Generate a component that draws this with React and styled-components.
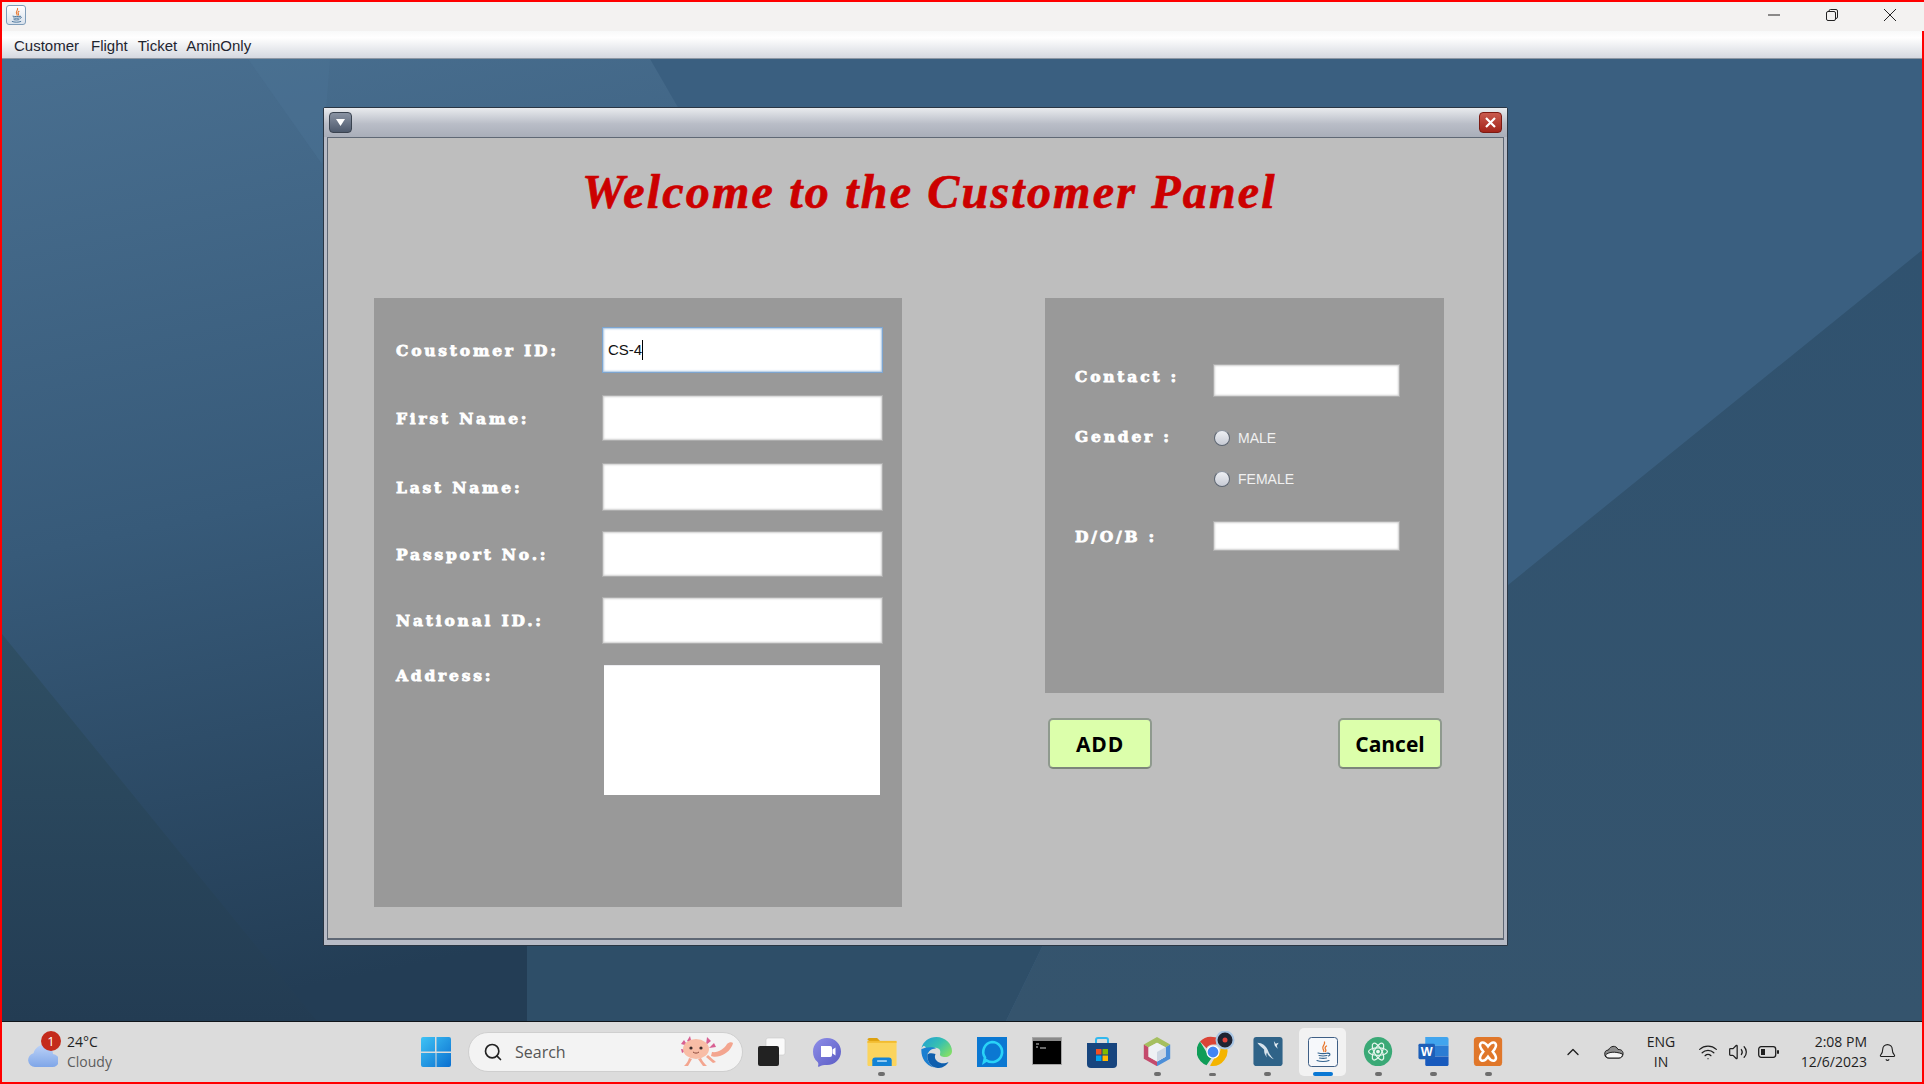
import styled, {createGlobalStyle} from "styled-components";
import {ChevronUp, Bell, Search, Wifi, Volume2} from "lucide-react";

const GlobalStyle = createGlobalStyle`
  html, body {
    margin: 0;
    padding: 0;
    background: #ff0000;
  }
  * {
    box-sizing: border-box;
  }
`

const Screen = styled.div`
  width: 1924px;
  height: 1084px;
  overflow: hidden;
  display: flex;
  flex-direction: column;
  padding: 2px 2px 2px 2px;
  background: #ff0000;
  font-family: "Liberation Sans", Arial, sans-serif;
`

const FrameTitle = styled.div`
  height: 29px;
  flex: none;
  display: flex;
  align-items: center;
  justify-content: space-between;
  padding: 0 0 3px 4px;
  margin-right: -2px;
  background: #f3f2f1;
`

const FrameControls = styled.div`
  display: flex;
  align-items: center;
  gap: 46px;
  padding-right: 28px;
`

const FrameIconTile = styled.div`
  width: 20px;
  height: 20px;
  border: 1px solid #7f9db9;
  border-radius: 3px;
  background: linear-gradient(#ffffff, #d9e2ec);
  display: flex;
  align-items: center;
  justify-content: center;
`

const MenuBar = styled.div`
  height: 28px;
  flex: none;
  display: flex;
  align-items: center;
  padding: 2px 0 0 7px;
  background: linear-gradient(#f8f9f9 0%, #ffffff 25%, #e6e8ec 70%, #d5d8e0 100%);
  border-bottom: 1px solid #8c96a3;
`

const MenuItem = styled.span`
  font-size: 15px;
  color: #1f2530;
  padding: 0 ${p => p.$pad}px 0 5px;
`

const Desktop = styled.div`
  flex: 1;
  position: relative;
  overflow: hidden;
  background: #3b6080;
`

const WallpaperArt = styled.svg`
  position: absolute;
  left: 0;
  top: 0;
  width: 100%;
  height: 100%;
`

const InternalWindow = styled.div`
  position: absolute;
  left: 321px;
  top: 48px;
  width: 1185px;
  height: 839px;
  display: flex;
  flex-direction: column;
  padding: 0 3px 5px 3px;
  border: 1px solid #2a3644;
  border-radius: 2px 2px 0 0;
  background: #b7bbc6;
`

const InternalTitle = styled.div`
  height: 29px;
  flex: none;
  margin: 0 -3px;
  padding: 4px 5px 4px 5px;
  display: flex;
  align-items: flex-start;
  justify-content: space-between;
  background: linear-gradient(#e9ebee, #b9bdc7 55%, #a9aeb9);
`

const MenuButton = styled.div`
  width: 23px;
  height: 21px;
  border-radius: 4px;
  border: 1px solid #3a4350;
  background: linear-gradient(#8a93a3, #4e5a6d);
  display: flex;
  align-items: center;
  justify-content: center;
`

const CloseButton = styled(MenuButton)`
  border-color: #7c1a12;
  background: linear-gradient(#c95a4e, #a3241a);
`

const Content = styled.div`
  flex: 1;
  display: flex;
  flex-direction: column;
  padding-left: 46px;
  border: 1px solid #5f6875;
  border-bottom-width: 2px;
  background: #bebebe;
`

const Heading = styled.h1`
  margin: 0;
  height: 160px;
  flex: none;
  padding-left: 208px;
  line-height: 108px;
  font-family: "Liberation Serif", "Times New Roman", serif;
  font-size: 48px;
  font-style: italic;
  font-weight: 700;
  letter-spacing: 2.2px;
  color: #cc0000;
  -webkit-text-stroke: 0.7px #cc0000;
  white-space: nowrap;
`

const Columns = styled.div`
  display: flex;
  align-items: flex-start;
  gap: 143px;
`

const LeftPanel = styled.div`
  width: 528px;
  height: 609px;
  padding: 29px 0 0 22px;
  background: #999999;
`

const RightColumn = styled.div`
  width: 399px;
  display: flex;
  flex-direction: column;
`

const RightPanel = styled.div`
  height: 395px;
  padding: 66px 0 0 30px;
  display: flex;
  flex-direction: column;
  gap: 20px;
  background: #999999;
`

const FormRow = styled.div`
  display: flex;
  align-items: ${p => p.$align || "center"};
  height: ${p => p.$h}px;
  margin-top: ${p => p.$mt || 0}px;
`

const Label = styled.div`
  width: ${p => p.$w}px;
  flex: none;
  margin-top: ${p => p.$drop || 0}px;
  margin-bottom: ${p => p.$lift || 0}px;
  font-family: "DejaVu Serif", "Liberation Serif", serif;
  font-size: 15.5px;
  font-weight: 700;
  letter-spacing: 2.8px;
  color: #ffffff;
  -webkit-text-stroke: 0.8px #ffffff;
  white-space: nowrap;
`

const Field = styled.div`
  width: ${p => p.$w}px;
  height: 100%;
  flex: none;
  display: flex;
  align-items: center;
  padding-left: 5px;
  font-size: 15px;
  color: #111111;
  background: #ffffff;
  border: 1px solid ${p => (p.$focused ? "#7da5d0" : "#adadad")};
  box-shadow: inset 0 0 2px 1px ${p => (p.$focused ? "#a9c5e2" : "#d0d0d0")};
`

const FieldValue = styled.span`
  border-right: 1px solid #000000;
  height: 20px;
  line-height: 20px;
  padding-right: 0;
`

const AddressBox = styled.div`
  width: 276px;
  height: 130px;
  margin-left: 2px;
  background: #ffffff;
  border-top: 1px solid #eeeef2;
`

const GenderRow = styled.div`
  display: flex;
  align-items: flex-start;
  height: 84px;
`

const GenderLabelSlot = styled.div`
  height: 39px;
  display: flex;
  align-items: center;
`

const RadioList = styled.div`
  display: flex;
  flex-direction: column;
`

const RadioRow = styled.div`
  height: 41px;
  display: flex;
  align-items: center;
  gap: 8px;
  padding-left: 1px;
  font-size: 14px;
  color: #f0f0f0;
`

const RadioDot = styled.span`
  width: 16px;
  height: 16px;
  border-radius: 50%;
  border: 1px solid #5d6672;
  border-top-color: #8f97a3;
  background: linear-gradient(#eef0f4, #c6cad4);
`

const ButtonRow = styled.div`
  margin-top: 25px;
  padding: 0 2px 0 3px;
  display: flex;
  justify-content: space-between;
`

const ActionButton = styled.div`
  width: 104px;
  height: 51px;
  display: flex;
  align-items: center;
  justify-content: center;
  border: 2px solid #8f9a8e;
  border-bottom-color: #7c857b;
  border-radius: 5px;
  background: #dcffab;
  font-family: "Open Sans", sans-serif;
  font-size: 21px;
  font-weight: 700;
  letter-spacing: ${p => p.$spacing || 0}px;
  color: #000000;
`

const Taskbar = styled.div`
  height: 61px;
  flex: none;
  display: flex;
  align-items: center;
  background: #dcdcdc;
  border-top: 1px solid #10151a;
  font-family: "Open Sans", sans-serif;
  position: relative;
`

const Weather = styled.div`
  width: 418px;
  flex: none;
  display: flex;
  align-items: center;
  gap: 9px;
  padding-left: 25px;
`

const WeatherIcon = styled.div`
  position: relative;
  width: 31px;
  height: 24px;
  margin-top: 7px;
`

const Badge = styled.span`
  position: absolute;
  right: -3px;
  top: -13px;
  width: 20px;
  height: 20px;
  border-radius: 50%;
  background: #c42b1c;
  color: #ffffff;
  font-size: 13px;
  line-height: 20px;
  text-align: center;
`

const TwoLines = styled.div`
  display: flex;
  flex-direction: column;
  align-items: ${p => p.$align || "flex-start"};
  width: ${p => (p.$w ? p.$w + "px" : "auto")};
  font-size: 14px;
  line-height: 20px;
  color: #1f1f1f;
`

const Muted = styled.span`
  color: #5c5c5c;
`

const StartButton = styled.div`
  width: 32px;
  height: 32px;
  flex: none;
`

const SearchPill = styled.div`
  width: 275px;
  height: 40px;
  flex: none;
  margin-left: 16px;
  display: flex;
  align-items: center;
  gap: 12px;
  padding: 0 8px 0 14px;
  border-radius: 20px;
  border: 1px solid #cfcfcf;
  background: #f3f3f3;
  font-size: 16px;
  color: #555555;
`

const Mascot = styled.div`
  margin-left: auto;
  height: 36px;
`

const AppList = styled.div`
  display: flex;
  gap: 8.15px;
  flex: none;
  margin-left: 5px;
`

const AppCell = styled.div`
  width: 47px;
  height: 48px;
  padding-top: 9px;
  display: flex;
  flex-direction: column;
  align-items: center;
  border-radius: 5px;
  background: ${p => (p.$active ? "#f2f2f2" : "transparent")};
`

const RunDot = styled.span`
  width: ${p => (p.$active ? 20 : 7)}px;
  height: 4px;
  margin-top: ${p => (p.$active ? 5 : 6)}px;
  border-radius: 2px;
  background: ${p => (p.$active ? "#0a78d4" : "#6e6e6e")};
`

const Tray = styled.div`
  margin-left: auto;
  display: flex;
  align-items: center;
  padding-right: 15px;
  color: #1f1f1f;
`

const TraySlot = styled.div`
  width: ${p => p.$w}px;
  display: flex;
  justify-content: center;
  align-items: center;
`

const ChromeWrap = styled.div`
  width: 38px;
  height: 36px;
  margin: -6px 0 0 6px;
`

const JavaGlyph = ({size}) => (
  <svg width={size} height={size} viewBox="0 0 24 24" fill="none">
    <path d="M13.5 2c1 3-3 4-1.500 7 .5 1 1 1.500.8 2.500M15.500 6c-2 1.200-1.500 2.500-.8 3.600.4.700.2 1.400-.2 1.900" stroke="#e8772e" strokeWidth="1.500" strokeLinecap="round"/>
    <path d="M7 13c3 .8 7 .8 10 0M8 15.500c2.500.6 5.500.6 8 0M8.500 18c2.200.5 5 .5 7 0M6 20.500c3 1.300 9 1.300 12 0M17 13.500c2-.5 3 1.500.5 2.500" stroke="#33648f" strokeWidth="1.200" strokeLinecap="round"/>
  </svg>
)

const WindowsLogo = () => (
  <svg width="32" height="32" viewBox="0 0 32 32">
    <defs>
      <linearGradient id="winGrad" x1="0" y1="0" x2="1" y2="1">
        <stop offset="0" stopColor="#3fc3f5"/>
        <stop offset="1" stopColor="#0a6fd0"/>
      </linearGradient>
    </defs>
    <path d="M1 3a2 2 0 0 1 2-2h12v14.500H1zM16.500 1H29a2 2 0 0 1 2 2v12.500H16.500zM1 17h14.500v14H3a2 2 0 0 1-2-2zM16.500 17H31v12a2 2 0 0 1-2 2H16.500z" fill="url(#winGrad)"/>
  </svg>
)

const Axolotl = () => (
  <svg width="58" height="36" viewBox="0 0 58 36">
    <path d="M36 18c6 1 12-3 15-8 2-2 5-2 6-1-1 5-6 11-13 13-3 1-7 1-9 0z" fill="#f3a58f"/>
    <path d="M8 6l4 6-7-2zM14 2l2 8-5-3zM31 3l-1 8 5-4zM38 9l-5 5 7-1zM5 15l6 1-5 3z" fill="#d85f92"/>
    <ellipse cx="20" cy="15" rx="13" ry="10" fill="#f8bda6"/>
    <path d="M13 24c-1 4-3 6-5 8h4l4-7zM25 24c2 4 4 6 6 8h-4l-5-7zM32 21c3 3 6 5 8 7l-3 1-7-6z" fill="#f3a58f"/>
    <circle cx="15" cy="14" r="1.600" fill="#3a2a2a"/>
    <circle cx="25" cy="14" r="1.600" fill="#3a2a2a"/>
    <path d="M17 18c2 1.500 4 1.500 6 0" stroke="#8c4a3c" strokeWidth="1" fill="none"/>
  </svg>
)

const TaskView = () => (
  <svg width="30" height="30" viewBox="0 0 30 30">
    <rect x="9" y="1" width="19" height="17" rx="2" fill="#fafafa" stroke="#c9c9c9" strokeWidth=".6"/>
    <rect x="1" y="9" width="21" height="20" rx="2" fill="#222222"/>
  </svg>
)

const TeamsIcon = () => (
  <svg width="30" height="30" viewBox="0 0 30 30">
    <defs>
      <linearGradient id="teamsGrad" x1="0" y1="0" x2="1" y2="1">
        <stop offset="0" stopColor="#8e8ee8"/>
        <stop offset="1" stopColor="#5a5bc4"/>
      </linearGradient>
    </defs>
    <path d="M15 1c8 0 14 6 14 13.500S23 28 15 28c-2 0-4-.4-6 .8-2 1.100-3.500 1.200-3 .2.500-1.100.6-2.800-.4-4C2.500 22.500 1 19 1 14.500 1 7 7 1 15 1z" fill="url(#teamsGrad)"/>
    <path d="M9 9h9a2 2 0 0 1 2 2v7a2 2 0 0 1-2 2H9z" fill="#ffffff"/>
    <path d="M20.500 12.500l3-2v8l-3-2z" fill="#ffffff"/>
  </svg>
)

const FolderIcon = () => (
  <svg width="32" height="30" viewBox="0 0 32 30">
    <path d="M1 3a2 2 0 0 1 2-2h8l3 3H3z" fill="#dda10f"/>
    <rect x="1" y="4" width="30" height="26" rx="1.500" fill="#fbd45e"/>
    <rect x="1" y="4" width="30" height="2" fill="#f2bc30"/>
    <path d="M6 30v-6a3 3 0 0 1 3-3h14a3 3 0 0 1 3 3v6z" fill="#1383d6"/>
    <rect x="11" y="24" width="10" height="1.500" fill="#bfe3fb"/>
  </svg>
)

const EdgeIcon = () => (
  <svg width="31" height="31" viewBox="0 0 31 31">
    <defs>
      <linearGradient id="edgeTop" x1="0" y1="0" x2="1" y2=".7">
        <stop offset="0" stopColor="#1f9cd8"/>
        <stop offset=".55" stopColor="#37c0b0"/>
        <stop offset="1" stopColor="#7fdd6a"/>
      </linearGradient>
    </defs>
    <path d="M15.500 0C24 0 31 6.500 31 14c0 4-3.500 6-7 6-3 0-5.500-1-5-3 .6-2 .8-5-3-6-4-1-7.500 1.500-9 5C5 11 4 6 .5 11 2 4.500 8 0 15.500 0z" fill="url(#edgeTop)"/>
    <path d="M.5 11C-.5 19 3.500 28 13 30.500c-4-2.500-7.500-7-6.500-13 .8-3.500 4.500-6.500 9-6-4.500-2.500-12-1-15 .5z" fill="#1b7fd1"/>
    <path d="M6.500 17.500c-1 6 3 13 10 13.500 5 .3 9-2.500 11-6-3 1.500-8 2-11-.5-3-2-3-5-2-7.500-3.500-1-6.500-1-8 .5z" fill="#0f5fae"/>
  </svg>
)

const AlexaIcon = () => (
  <svg width="30" height="30" viewBox="0 0 30 30">
    <rect width="30" height="30" fill="#0b78d2"/>
    <path d="M15 5a10 10 0 1 1-5.500 18.300L7 25l1-4.500A10 10 0 0 1 15 5z" fill="none" stroke="#29d3f7" strokeWidth="2.600"/>
  </svg>
)

const TerminalIcon = () => (
  <svg width="30" height="28" viewBox="0 0 30 28">
    <rect x=".5" y=".5" width="29" height="27" fill="#000000" stroke="#a6a6a6"/>
    <rect x="1" y="1" width="28" height="3" fill="#8a8a8a"/>
    <path d="M4 7h3M4 10h2M8 11h6" stroke="#cfcfcf" strokeWidth="1"/>
  </svg>
)

const StoreIcon = () => (
  <svg width="30" height="31" viewBox="0 0 30 31">
    <path d="M9 7V3a2 2 0 0 1 2-2h8a2 2 0 0 1 2 2v4" fill="none" stroke="#32b8ee" strokeWidth="2"/>
    <path d="M0 6h30v21a4 4 0 0 1-4 4H4a4 4 0 0 1-4-4z" fill="#17457e"/>
    <rect x="9" y="12" width="5.500" height="5.500" fill="#f25022"/>
    <rect x="15.500" y="12" width="5.500" height="5.500" fill="#7fba00"/>
    <rect x="9" y="18.500" width="5.500" height="5.500" fill="#00a4ef"/>
    <rect x="15.500" y="18.500" width="5.500" height="5.500" fill="#ffb900"/>
  </svg>
)

const CubeIcon = () => (
  <svg width="28" height="31" viewBox="0 0 28 31">
    <path d="M14 0l14 8-5 3-9-5-9 5-5-3z" fill="#a5bf5f"/>
    <path d="M28 8v15l-14 8v-5l9-5V11z" fill="#4d8fd8"/>
    <path d="M0 8v15l14 8v-5l-9-5V11z" fill="#c44a6c"/>
    <path d="M14 6l9 5v10l-9 5-9-5V11z" fill="#eef1f4"/>
    <path d="M14 16l9-5v10l-9 5z" fill="#ccd6e2"/>
  </svg>
)

const ChromeIcon = () => (
  <ChromeWrap>
    <svg width="38" height="36" viewBox="0 0 38 36">
      <path d="M16 6a15 15 0 0 1 13 7.500H16a7.500 7.500 0 0 0-6.500 3.700L3 10.500A15 15 0 0 1 16 6z" fill="#db4437"/>
      <path d="M3 10.500l6.500 10.700a7.500 7.500 0 0 0 6.500 3.800L9.500 34.200A15 15 0 0 1 3 10.500z" fill="#0f9d58"/>
      <path d="M29 13.500a15 15 0 0 1-16 21.200l6-10.400a7.500 7.500 0 0 0 3.500-10.800z" fill="#f4b400"/>
      <circle cx="16" cy="21" r="6" fill="#4285f4" stroke="#ffffff" strokeWidth="1.200"/>
      <circle cx="28" cy="9" r="8.500" fill="#1f2433" stroke="#a9c6e4" strokeWidth="2"/>
      <circle cx="28" cy="9" r="2.500" fill="#e0413b"/>
    </svg>
  </ChromeWrap>
)

const MysqlIcon = () => (
  <svg width="30" height="30" viewBox="0 0 30 30">
    <rect width="30" height="30" rx="3" fill="#2f6388"/>
    <path d="M4 6c5 0 9 3 11 8 1 3 3 6 6 9-4-2-6-4-7-7-1 2-1 3 0 5-3-3-3-6-3-8-2-2-5-4-7-7z" fill="#d7e3ec"/>
    <path d="M21 4l2 3 3-1-2 3 1 3-3-3z" fill="#e6eef4"/>
  </svg>
)

const JavaTile = () => (
  <svg width="30" height="30" viewBox="0 0 30 30">
    <rect x=".5" y=".5" width="29" height="29" rx="3" fill="#f6f8fb" stroke="#3f5f85"/>
    <g transform="translate(3 3)">
      <path d="M13.500 2c1 3-3 4-1.500 7 .5 1 1 1.500.8 2.500M15.500 6c-2 1.200-1.500 2.500-.8 3.600.4.700.2 1.400-.2 1.900" stroke="#e8772e" strokeWidth="1.300" fill="none" strokeLinecap="round"/>
      <path d="M7 13c3 .8 7 .8 10 0M8 15.500c2.500.6 5.500.6 8 0M8.500 18c2.200.5 5 .5 7 0M6 20.500c3 1.300 9 1.300 12 0M17 13.500c2-.5 3 1.500.5 2.500" stroke="#33648f" strokeWidth="1.100" fill="none" strokeLinecap="round"/>
    </g>
  </svg>
)

const AtomIcon = () => (
  <svg width="30" height="31" viewBox="0 0 30 31">
    <ellipse cx="15" cy="15.500" rx="15" ry="15.500" fill="#3aa976"/>
    <g fill="none" stroke="#e6f6ee" strokeWidth="1.300">
      <ellipse cx="15" cy="15.500" rx="10" ry="4"/>
      <ellipse cx="15" cy="15.500" rx="10" ry="4" transform="rotate(60 15 15.500)"/>
      <ellipse cx="15" cy="15.500" rx="10" ry="4" transform="rotate(120 15 15.500)"/>
    </g>
    <circle cx="15" cy="15.500" r="2" fill="#e6f6ee"/>
  </svg>
)

const WordIcon = () => (
  <svg width="31" height="30" viewBox="0 0 31 30">
    <path d="M7 0h22a2 2 0 0 1 2 2v7H7z" fill="#41a5ee"/>
    <rect x="7" y="9" width="24" height="11" fill="#2b7cd3"/>
    <path d="M7 20h24v8a2 2 0 0 1-2 2H9a2 2 0 0 1-2-2z" fill="#185abd"/>
    <rect x="0" y="7" width="17" height="16" rx="1.500" fill="#1d5fb8"/>
    <text x="8.500" y="20" textAnchor="middle" fontFamily="Liberation Sans, sans-serif" fontSize="13" fontWeight="700" fill="#ffffff">W</text>
  </svg>
)

const XamppIcon = () => (
  <svg width="30" height="31" viewBox="0 0 30 31">
    <rect width="30" height="31" rx="4" fill="#e0772a"/>
    <path d="M8 6c3-1 5 1 7 4 2-3 4-5 7-4 3 2 1 6-2 9.500 3 3.500 5 7.500 2 9.500-3 1-5-1-7-4-2 3-4 5-7 4-3-2-1-6 2-9.500C7 12 5 8 8 6z" fill="none" stroke="#ffffff" strokeWidth="2.600"/>
  </svg>
)

const apps = [
    {key: "task", Icon: TaskView},
    {key: "teams", Icon: TeamsIcon},
    {key: "folder", Icon: FolderIcon, running: true},
    {key: "edge", Icon: EdgeIcon},
    {key: "alexa", Icon: AlexaIcon},
    {key: "terminal", Icon: TerminalIcon},
    {key: "store", Icon: StoreIcon},
    {key: "cube", Icon: CubeIcon, running: true},
    {key: "chrome", Icon: ChromeIcon, running: true},
    {key: "mysql", Icon: MysqlIcon, running: true},
    {key: "java", Icon: JavaTile, running: true, active: true},
    {key: "atom", Icon: AtomIcon, running: true},
    {key: "word", Icon: WordIcon, running: true},
    {key: "xampp", Icon: XamppIcon, running: true},
]

const leftRows = [
    {label: "Coustomer ID:", h: 46, mt: 0, focused: true},
    {label: "First Name:", h: 46, mt: 22},
    {label: "Last Name:", h: 48, mt: 22},
    {label: "Passport No.:", h: 46, mt: 20},
    {label: "National ID.:", h: 47, mt: 20},
]

const Wallpaper = () => (
    <WallpaperArt viewBox="2 59 1920 962" preserveAspectRatio="none">
        <defs>
            <linearGradient id="wallLeft" x1="0.05" y1="0" x2="0.2" y2="1">
                <stop offset="0" stopColor="#496f90"/>
                <stop offset=".5" stopColor="#375a79"/>
                <stop offset="1" stopColor="#233d55"/>
            </linearGradient>
            <linearGradient id="wallRight" x1="0" y1="0" x2="0" y2="1">
                <stop offset="0" stopColor="#30526f"/>
                <stop offset="1" stopColor="#35546d"/>
            </linearGradient>
            <linearGradient id="wallDark" x1="0" y1="0" x2="0" y2="1">
                <stop offset="0" stopColor="#2f4f64"/>
                <stop offset="1" stopColor="#233c53"/>
            </linearGradient>
        </defs>
        <rect x="2" y="59" width="1920" height="962" fill="#3a5f80"/>
        <polygon points="2,59 650,59 687,123 700,500 530,945 527,1021 2,1021" fill="url(#wallLeft)"/>
        <polygon points="248,59 322,164 330,59" fill="#4c7395" opacity=".45"/>
        <polygon points="2,634 317,1021 2,1021" fill="url(#wallDark)"/>
        <polygon points="527,945 1043,945 1006,1021 527,1021" fill="#2e4e68"/>
        <polygon points="1921,251 1508,585 1200,760 1043,945 1006,1021 1922,1021 1922,251" fill="url(#wallRight)"/>
    </WallpaperArt>
)

const App = () => (
    <Screen>
        <GlobalStyle/>
        <FrameTitle>
            <FrameIconTile><JavaGlyph size={17}/></FrameIconTile>
            <FrameControls>
                <svg width="12" height="12" viewBox="0 0 12 12"><path d="M0 6h12" stroke="#222" strokeWidth="1"/></svg>
                <svg width="12" height="12" viewBox="0 0 12 12" fill="none" stroke="#222" strokeWidth="1"><rect x=".5" y="2.500" width="9" height="9" rx="1.500"/><path d="M3 2.500V2a1.500 1.500 0 0 1 1.500-1.500H10A1.500 1.500 0 0 1 11.500 2v6A1.500 1.500 0 0 1 10 9.500"/></svg>
                <svg width="12" height="12" viewBox="0 0 12 12"><path d="M0 0l12 12M12 0L0 12" stroke="#222" strokeWidth="1"/></svg>
            </FrameControls>
        </FrameTitle>
        <MenuBar>
            <MenuItem $pad={7}>Customer</MenuItem>
            <MenuItem $pad={5}>Flight</MenuItem>
            <MenuItem $pad={4}>Ticket</MenuItem>
            <MenuItem $pad={0}>AminOnly</MenuItem>
        </MenuBar>
        <Desktop>
            <Wallpaper/>
            <InternalWindow>
                <InternalTitle>
                    <MenuButton>
                        <svg width="9" height="7" viewBox="0 0 9 7"><path d="M0 0h9L4.500 7z" fill="#ffffff"/></svg>
                    </MenuButton>
                    <CloseButton>
                        <svg width="11" height="11" viewBox="0 0 11 11"><path d="M1 1l9 9M10 1l-9 9" stroke="#ffffff" strokeWidth="2.200"/></svg>
                    </CloseButton>
                </InternalTitle>
                <Content>
                    <Heading>Welcome to the Customer Panel</Heading>
                    <Columns>
                        <LeftPanel>
                            {leftRows.map(row => (
                                <FormRow key={row.label} $h={row.h} $mt={row.mt}>
                                    <Label $w={206} $lift={row.lift}>{row.label}</Label>
                                    <Field $w={281} $focused={row.focused}>
                                        {row.focused && <FieldValue>CS-4</FieldValue>}
                                    </Field>
                                </FormRow>
                            ))}
                            <FormRow $h={130} $mt={21} $align="flex-start">
                                <Label $w={206} $drop={1}>Address:</Label>
                                <AddressBox/>
                            </FormRow>
                        </LeftPanel>
                        <RightColumn>
                            <RightPanel>
                                <FormRow $h={33}>
                                    <Label $w={138} $lift={8}>Contact :</Label>
                                    <Field $w={187}/>
                                </FormRow>
                                <GenderRow>
                                    <GenderLabelSlot><Label $w={138}>Gender :</Label></GenderLabelSlot>
                                    <RadioList>
                                        <RadioRow><RadioDot/>MALE</RadioRow>
                                        <RadioRow><RadioDot/>FEMALE</RadioRow>
                                    </RadioList>
                                </GenderRow>
                                <FormRow $h={30}>
                                    <Label $w={138}>D/O/B :</Label>
                                    <Field $w={187}/>
                                </FormRow>
                            </RightPanel>
                            <ButtonRow>
                                <ActionButton $spacing={0.8}>ADD</ActionButton>
                                <ActionButton>Cancel</ActionButton>
                            </ButtonRow>
                        </RightColumn>
                    </Columns>
                </Content>
            </InternalWindow>
        </Desktop>
        <Taskbar>
            <Weather>
                <WeatherIcon>
                    <svg width="31" height="24" viewBox="0 0 31 24">
                        <defs>
                            <linearGradient id="cloudGrad" x1="0" y1="0" x2="0" y2="1">
                                <stop offset="0" stopColor="#bcd2f7"/>
                                <stop offset="1" stopColor="#7fa6e8"/>
                            </linearGradient>
                        </defs>
                        <path d="M8 23a7 7 0 0 1-1.500-13.800C8 4 13 0 18 1c5 1 8 5 8 9a6.500 6.500 0 0 1-1 13z" fill="url(#cloudGrad)"/>
                    </svg>
                    <Badge>1</Badge>
                </WeatherIcon>
                <TwoLines>
                    <span>24°C</span>
                    <Muted>Cloudy</Muted>
                </TwoLines>
            </Weather>
            <StartButton><WindowsLogo/></StartButton>
            <SearchPill>
                <Search size={20} color="#222" strokeWidth={2}/>
                <span>Search</span>
                <Mascot><Axolotl/></Mascot>
            </SearchPill>
            <AppList>
                {apps.map(({key, Icon, running, active}) => (
                    <AppCell key={key} $active={active}>
                        <Icon/>
                        {running && <RunDot $active={active}/>}
                    </AppCell>
                ))}
            </AppList>
            <Tray>
                <TraySlot $w={52}><ChevronUp size={20} strokeWidth={1.600}/></TraySlot>
                <TraySlot $w={30}>
                    <svg width="20" height="14" viewBox="0 0 20 14"><path d="M5 13a4 4 0 0 1-.5-8C6 1 12-.5 14 4.500c3.500-.3 5.500 2 5 5-.3 2-2 3.500-4 3.500z" fill="#8d8d8d" stroke="#1f1f1f" strokeWidth="1"/><path d="M1.500 10c3-3 9-4 17-1 .3 2-1.500 4-3.500 4H5c-2 0-3-1-3.500-3z" fill="#f5f5f5" stroke="#1f1f1f" strokeWidth="1"/></svg>
                </TraySlot>
                <TraySlot $w={64}>
                    <TwoLines $align="center"><span>ENG</span><span>IN</span></TwoLines>
                </TraySlot>
                <TraySlot $w={30}><Wifi size={20} strokeWidth={1.500}/></TraySlot>
                <TraySlot $w={30}><Volume2 size={20} strokeWidth={1.500}/></TraySlot>
                <TraySlot $w={30}>
                    <svg width="21" height="12" viewBox="0 0 21 12"><rect x=".7" y=".7" width="17" height="10.600" rx="2.500" fill="none" stroke="#1f1f1f" strokeWidth="1.300"/><rect x="3" y="3" width="4" height="6" fill="#1f1f1f"/><rect x="19" y="4" width="2" height="4" rx="1" fill="#1f1f1f"/></svg>
                </TraySlot>
                <TwoLines $align="flex-end" $w={84}><span>2:08 PM</span><span>12/6/2023</span></TwoLines>
                <TraySlot $w={40}><Bell size={19} strokeWidth={1.400}/></TraySlot>
            </Tray>
        </Taskbar>
    </Screen>
)

export default App
